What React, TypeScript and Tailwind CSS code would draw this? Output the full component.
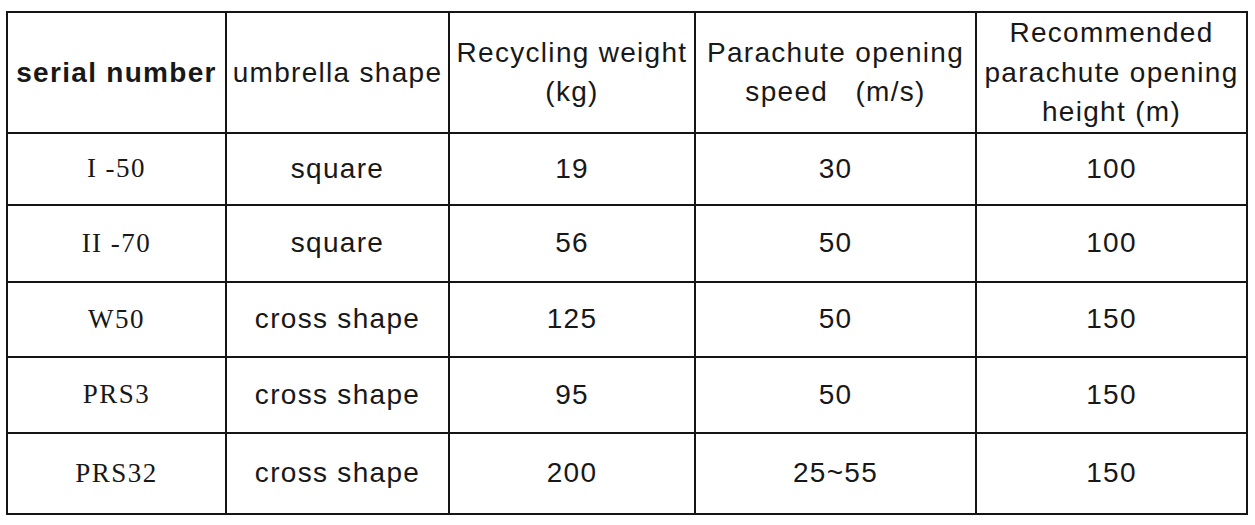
const sans = "font-['Liberation_Sans',Arial,sans-serif]";
const serif = "font-['Liberation_Serif','Times_New_Roman',serif]";

type Row = { serial: string; shape: string; weight: string; speed: string; height: string; h: string };

const rows: Row[] = [
  { serial: "I -50", shape: "square", weight: "19", speed: "30", height: "100", h: "h-[72px]" },
  { serial: "II -70", shape: "square", weight: "56", speed: "50", height: "100", h: "h-[77px]" },
  { serial: "W50", shape: "cross shape", weight: "125", speed: "50", height: "150", h: "h-[75px]" },
  { serial: "PRS3", shape: "cross shape", weight: "95", speed: "50", height: "150", h: "h-[76px]" },
  { serial: "PRS32", shape: "cross shape", weight: "200", speed: "25~55", height: "150", h: "h-[81px]" },
];

const cell = "border-2 border-[#151515] text-center align-middle p-0";

export default function App() {
  return (
    <div className="w-[1255px] h-[525px] bg-white pt-[11px] pl-[6px]">
      <table className="table-fixed border-collapse w-[1240px] text-[#181818]">
        <colgroup>
          <col className="w-[219px]" />
          <col className="w-[223px]" />
          <col className="w-[246px]" />
          <col className="w-[281px]" />
          <col className="w-[271px]" />
        </colgroup>
        <thead>
          <tr className={`h-[120px] text-[28px] leading-[39.5px] tracking-[1.3px] ${sans}`}>
            <th className={`${cell} font-bold whitespace-nowrap`}>serial number</th>
            <th className={`${cell} font-normal whitespace-nowrap`}>umbrella shape</th>
            <th className={`${cell} font-normal whitespace-nowrap`}>
              Recycling weight
              <br />
              (kg)
            </th>
            <th className={`${cell} font-normal whitespace-pre`}>
              Parachute opening
              <br />
              {"speed   (m/s)"}
            </th>
            <th className={`${cell} font-normal whitespace-nowrap`}>
              Recommended
              <br />
              parachute opening
              <br />
              height (m)
            </th>
          </tr>
        </thead>
        <tbody>
          {rows.map((r) => (
            <tr key={r.serial} className={r.h}>
              <td className={`${cell} ${serif} text-[27px] tracking-[1.5px]`}>{r.serial}</td>
              <td className={`${cell} ${sans} text-[28px] tracking-[1.3px]`}>{r.shape}</td>
              <td className={`${cell} ${sans} text-[28px] tracking-[1.3px]`}>{r.weight}</td>
              <td className={`${cell} ${sans} text-[28px] tracking-[1.3px]`}>{r.speed}</td>
              <td className={`${cell} ${sans} text-[28px] tracking-[1.3px]`}>{r.height}</td>
            </tr>
          ))}
        </tbody>
      </table>
    </div>
  );
}
